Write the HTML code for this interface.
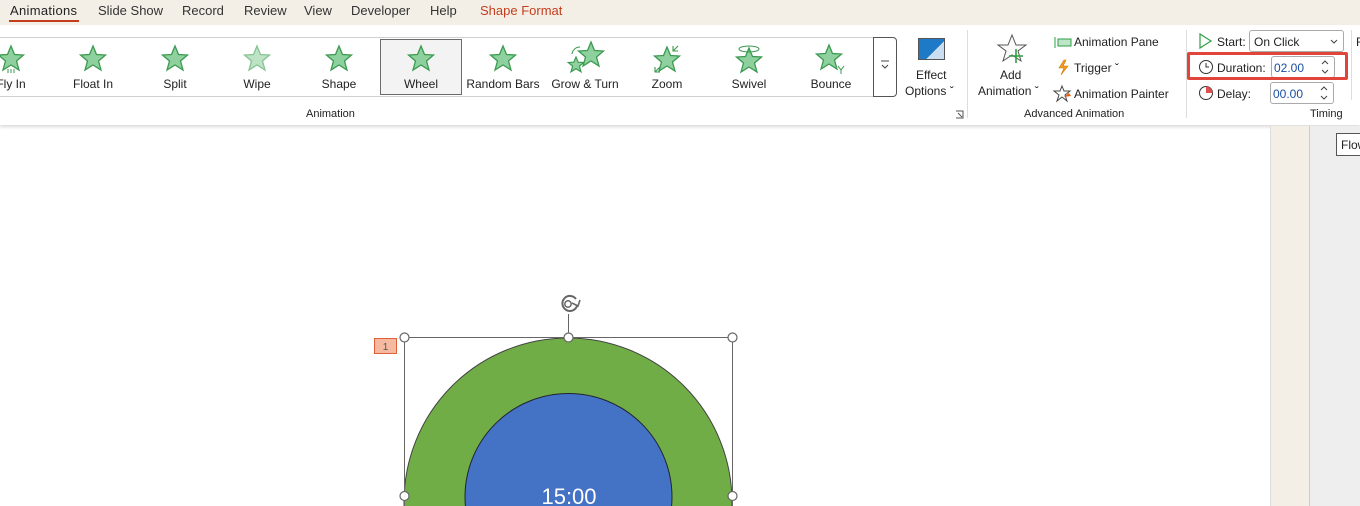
<!DOCTYPE html>
<html><head><meta charset="utf-8"><style>
*{margin:0;padding:0;box-sizing:border-box}
html,body{width:1360px;height:506px;overflow:hidden}
body{background:#fff;font-family:"Liberation Sans",sans-serif;position:relative;color:#222}
.a{position:absolute;white-space:nowrap}
.tab{position:absolute;top:3px;font-size:13px;color:#333}
.lbl{position:absolute;top:77px;font-size:12px;width:82px;text-align:center;color:#222}
.s{font-size:12px}
.sp{position:absolute;right:5px;top:2px;width:8px;height:16px}
</style></head><body>
<div class="a" style="left:0;top:0;width:1360px;height:25px;background:#f3efe7"></div>
<div class="tab" style="left:10px;color:#222;letter-spacing:0.3px">Animations</div>
<div class="a" style="left:9px;top:20px;width:70px;height:2px;background:#c43e1c"></div>
<div class="tab" style="left:98px">Slide Show</div>
<div class="tab" style="left:182px">Record</div>
<div class="tab" style="left:244px">Review</div>
<div class="tab" style="left:304px">View</div>
<div class="tab" style="left:351px">Developer</div>
<div class="tab" style="left:430px">Help</div>
<div class="tab" style="left:480px;color:#c43e1c">Shape Format</div>

<div class="a" style="left:0;top:25px;width:1360px;height:100px;background:#fff;box-shadow:0 2px 3px rgba(0,0,0,0.15)"></div>
<div class="a" style="left:0;top:37px;width:873px;height:60px;border-top:1px solid #d0d0d0;border-bottom:1px solid #d0d0d0"></div>
<div class="a" style="left:380px;top:39px;width:82px;height:56px;background:#f3f3f3;border:1px solid #6b6b6b"></div>
<div class="a" style="left:873px;top:37px;width:24px;height:60px;border:1px solid #555;border-radius:0 4px 4px 0"></div>
<svg class="a" style="left:879px;top:60px" width="12" height="10"><path d="M2 1h8M3 5l3 3 3-3" stroke="#444" fill="none"/></svg>

<svg class="a" style="left:0;top:0" width="900" height="100">
<defs><g id="st"><polygon points="0,-13 3.5,-4.5 12.5,-4 5.5,2 8,11 0,6 -8,11 -5.5,2 -12.5,-4 -3.5,-4.5" fill="#8fd19e" stroke="#3a9a4f" stroke-width="1.3"/></g>
<g id="sm"><polygon points="0,-8 2.2,-2.8 7.7,-2.5 3.4,1.2 5,6.8 0,3.7 -5,6.8 -3.4,1.2 -7.7,-2.5 -2.2,-2.8" fill="#8fd19e" stroke="#3a9a4f" stroke-width="1.2"/></g></defs>
<use href="#st" x="11" y="59"/><use href="#st" x="93" y="59"/><use href="#st" x="175" y="59"/>
<use href="#st" x="257" y="59" opacity="0.6"/><use href="#st" x="339" y="59"/><use href="#st" x="421" y="59"/>
<use href="#st" x="503" y="59"/><use href="#sm" x="576" y="65"/><use href="#st" x="591" y="55"/>
<use href="#st" x="667" y="60"/><use href="#st" x="749" y="61"/><use href="#st" x="829" y="58"/>
<path d="M8 69v4M11 69v4M14 69v4" stroke="#3a9a4f"/>
<path d="M678 46l-5 5M673 46v5h5M655 72l5-5M655 67v5h5" stroke="#3a9a4f" stroke-width="1.1" fill="none"/>
<ellipse cx="749" cy="49" rx="10" ry="3" fill="none" stroke="#3a9a4f"/>
<path d="M838 66l3 4 3-4M841 70v4" stroke="#3a9a4f" fill="none"/>
<path d="M572 54a8 8 0 0 1 8-7" stroke="#3a9a4f" fill="none"/>
</svg>
<div class="lbl" style="left:-30px">Fly In</div>
<div class="lbl" style="left:52px">Float In</div>
<div class="lbl" style="left:134px">Split</div>
<div class="lbl" style="left:216px">Wipe</div>
<div class="lbl" style="left:298px">Shape</div>
<div class="lbl" style="left:380px">Wheel</div>
<div class="lbl" style="left:462px">Random Bars</div>
<div class="lbl" style="left:544px">Grow &amp; Turn</div>
<div class="lbl" style="left:626px">Zoom</div>
<div class="lbl" style="left:708px">Swivel</div>
<div class="lbl" style="left:790px">Bounce</div>
<div class="a s" style="left:306px;top:108px;font-size:11px">Animation</div>

<div class="a" style="left:918px;top:38px;width:27px;height:22px;border:1px solid #555;background:linear-gradient(135deg,#1e7ac6 60%,#c9def0 61%)"></div>
<div class="a s" style="left:916px;top:68px">Effect</div>
<div class="a s" style="left:905px;top:84px">Options &#711;</div>
<svg class="a" style="left:955px;top:110px" width="9" height="9"><path d="M1 1h7v7H1M3 3l4 4" stroke="#555" fill="none"/></svg>
<div class="a" style="left:967px;top:30px;width:1px;height:88px;background:#ddd"></div>

<svg class="a" style="left:995px;top:33px" width="35" height="32"><polygon points="17,2 21,12 31,12 23,18 26,28 17,22 8,28 11,18 3,12 13,12" fill="#fafafa" stroke="#555"/><path d="M21 16v14M14 23h14" stroke="#2ea043" stroke-width="1.6"/></svg>
<div class="a s" style="left:1000px;top:68px">Add</div>
<div class="a s" style="left:978px;top:84px">Animation &#711;</div>
<svg class="a" style="left:1053px;top:35px" width="20" height="70"><path d="M2 2v11M5 4h13v7H5z" stroke="#2ea043" fill="#bfe5c8"/><path d="M11 25l-5 8h5l-3 7 7-9h-5l3-6z" fill="#f0a020" stroke="#d07000" stroke-width="0.6"/><polygon points="9,51 11,56 17,56 12,60 14,66 9,62 4,66 6,60 1,56 7,56" fill="#fff" stroke="#444"/><path d="M11 62l5-4 2 3z" fill="#e06010"/></svg>
<div class="a s" style="left:1074px;top:35px">Animation Pane</div>
<div class="a s" style="left:1074px;top:61px">Trigger &#711;</div>
<div class="a s" style="left:1074px;top:87px">Animation Painter</div>
<div class="a" style="left:1024px;top:108px;font-size:11px">Advanced Animation</div>
<div class="a" style="left:1186px;top:30px;width:1px;height:88px;background:#ddd"></div>

<svg class="a" style="left:1198px;top:32px" width="16" height="70"><path d="M2 2l11 7-11 7z" fill="none" stroke="#2ea043" stroke-width="1.2"/><circle cx="8" cy="35" r="6.5" fill="none" stroke="#333"/><path d="M8 31v4h3" stroke="#333" fill="none"/><circle cx="8" cy="61" r="6.5" fill="none" stroke="#333"/><path d="M8 54.5a6.5 6.5 0 0 1 6.5 6.5H8z" fill="#e05050"/></svg>
<div class="a s" style="left:1217px;top:35px">Start:</div>
<div class="a" style="left:1249px;top:30px;width:95px;height:22px;border:1px solid #aaa;border-radius:3px;font-size:12px;padding:4px 0 0 4px">On Click<svg style="position:absolute;right:5px;top:8px" width="8" height="6"><path d="M1 1l3 3 3-3" stroke="#444" fill="none"/></svg></div>
<div class="a s" style="left:1217px;top:61px">Duration:</div>
<div class="a" style="left:1271px;top:56px;width:64px;height:22px;border:1px solid #aaa;border-radius:3px;font-size:12px;padding:4px 0 0 2px;color:#1a4fa0">02.00<svg class="sp" viewBox="0 0 8 16"><path d="M1 5l3-3 3 3M1 11l3 3 3-3" stroke="#444" fill="none"/></svg></div>
<div class="a" style="left:1187px;top:52px;width:161px;height:28px;border:3px solid #e0443a;border-radius:2px"></div>
<div class="a s" style="left:1217px;top:87px">Delay:</div>
<div class="a" style="left:1270px;top:82px;width:64px;height:22px;border:1px solid #aaa;border-radius:3px;font-size:12px;padding:4px 0 0 2px;color:#1a4fa0">00.00<svg class="sp" viewBox="0 0 8 16"><path d="M1 5l3-3 3 3M1 11l3 3 3-3" stroke="#444" fill="none"/></svg></div>
<div class="a" style="left:1310px;top:108px;font-size:11px">Timing</div>
<div class="a" style="left:1351px;top:30px;width:1px;height:70px;background:#ddd"></div>
<div class="a s" style="left:1356px;top:35px">F</div>

<div class="a" style="left:1270px;top:126px;width:40px;height:380px;background:#f3efe7;border-left:1px solid #ddd;border-right:1px solid #ccc"></div>
<div class="a" style="left:1310px;top:126px;width:50px;height:380px;background:#eeeeee"></div>
<div class="a" style="left:1336px;top:133px;width:30px;height:23px;border:1px solid #555;background:#fff;font-size:12px;padding:4px 0 0 4px">Flow</div>

<svg class="a" style="left:0;top:0;overflow:hidden" width="1270" height="506">
<circle cx="568" cy="502" r="164" fill="#70ad47" stroke="#444" stroke-width="1"/>
<circle cx="568.5" cy="497" r="103.5" fill="#4472c4" stroke="#223" stroke-width="1"/>
<text x="569" y="504" font-family="Liberation Sans" font-size="22" fill="#fff" text-anchor="middle">15:00</text>
<line x1="404.5" y1="337.5" x2="732.5" y2="337.5" stroke="#666"/>
<line x1="404.5" y1="337.5" x2="404.5" y2="506" stroke="#666"/>
<line x1="732.5" y1="337.5" x2="732.5" y2="506" stroke="#666"/>
<line x1="568.5" y1="314" x2="568.5" y2="337" stroke="#666"/>
<g fill="#fff" stroke="#666" stroke-width="1.2"><circle cx="404.5" cy="337.5" r="4.5"/><circle cx="568.5" cy="337.5" r="4.5"/><circle cx="732.5" cy="337.5" r="4.5"/><circle cx="404.5" cy="496" r="4.5"/><circle cx="732.5" cy="496" r="4.5"/></g>
<path d="M576 299a7.5 7.5 0 1 0 1 7" fill="none" stroke="#666" stroke-width="2"/><path d="M572 303l6 3 2-6" fill="none" stroke="#666" stroke-width="1.6"/><circle cx="568" cy="304" r="3.2" fill="none" stroke="#666" stroke-width="1.5"/>
<rect x="374.5" y="338.5" width="22" height="15" fill="#f5b9a0" stroke="#e0603a"/>
<text x="385.5" y="350" font-family="Liberation Sans" font-size="10" fill="#555" text-anchor="middle">1</text>
</svg>
</body></html>
